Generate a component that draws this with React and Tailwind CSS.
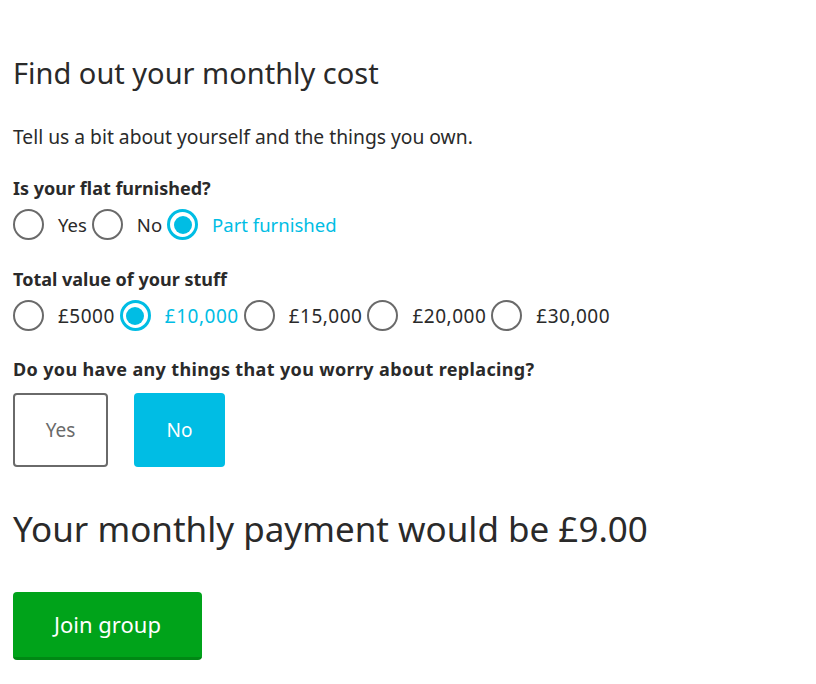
import React from "react";

function Radio({ label, checked, num }) {
  return (
    <label className="flex items-center">
      {checked ? (
        <span className="w-[31px] h-[31px] rounded-full border-[3px] border-[#00bde4] flex items-center justify-center">
          <span className="w-[18px] h-[18px] rounded-full bg-[#00bde4]" />
        </span>
      ) : (
        <span className="w-[31px] h-[31px] rounded-full border-2 border-[#6a6a6a]" />
      )}
      <span
        className={`ml-[14px] mr-[5px] leading-[24px] ${num ? "text-[19px] tracking-[0.5px]" : "text-[18.5px]"} ${checked ? "text-[#00bde4]" : "text-[#2a2a2a]"}`}
      >
        {label}
      </span>
    </label>
  );
}

export default function App() {
  return (
    <div className="bg-white min-h-[684px] px-[13px] pt-[55px] text-[#2a2a2a]" style={{ fontFamily: "'Noto Sans', sans-serif" }}>
      <h1 className="text-[29px] leading-[36px] font-normal">Find out your monthly cost</h1>
      <p className="mt-[34px] text-[19.25px] leading-[24px]">Tell us a bit about yourself and the things you own.</p>
      <div className="mt-[28px] text-[18px] font-bold leading-[22px]">Is your flat furnished?</div>
      <div className="mt-[10px] flex">
        <Radio label="Yes" />
        <Radio label="No" />
        <Radio label="Part furnished" checked />
      </div>
      <div className="mt-[28px] text-[18px] font-bold leading-[22px]">Total value of your stuff</div>
      <div className="mt-[10px] flex">
        <Radio label="£5000" num />
        <Radio label="£10,000" checked num />
        <Radio label="£15,000" num />
        <Radio label="£20,000" num />
        <Radio label="£30,000" num />
      </div>
      <div className="mt-[27px] text-[18px] tracking-[0.35px] font-bold leading-[22px]">Do you have any things that you worry about replacing?</div>
      <div className="mt-[13px] flex gap-[26px]">
        <button className="w-[95px] h-[74px] border-2 border-[#6a6a6a] rounded-[4px] text-[19px] text-[#6a6a6a] bg-white">Yes</button>
        <button className="w-[91px] h-[74px] rounded-[4px] text-[19px] text-white bg-[#00bde4]">No</button>
      </div>
      <div className="mt-[40px] text-[35px] leading-[44px]">Your monthly payment would be £9.00</div>
      <button className="mt-[41px] w-[189px] h-[68px] rounded-[4px] bg-[#00a31a] border-b-[3px] border-[#008814] text-white text-[22px]">Join group</button>
    </div>
  );
}
